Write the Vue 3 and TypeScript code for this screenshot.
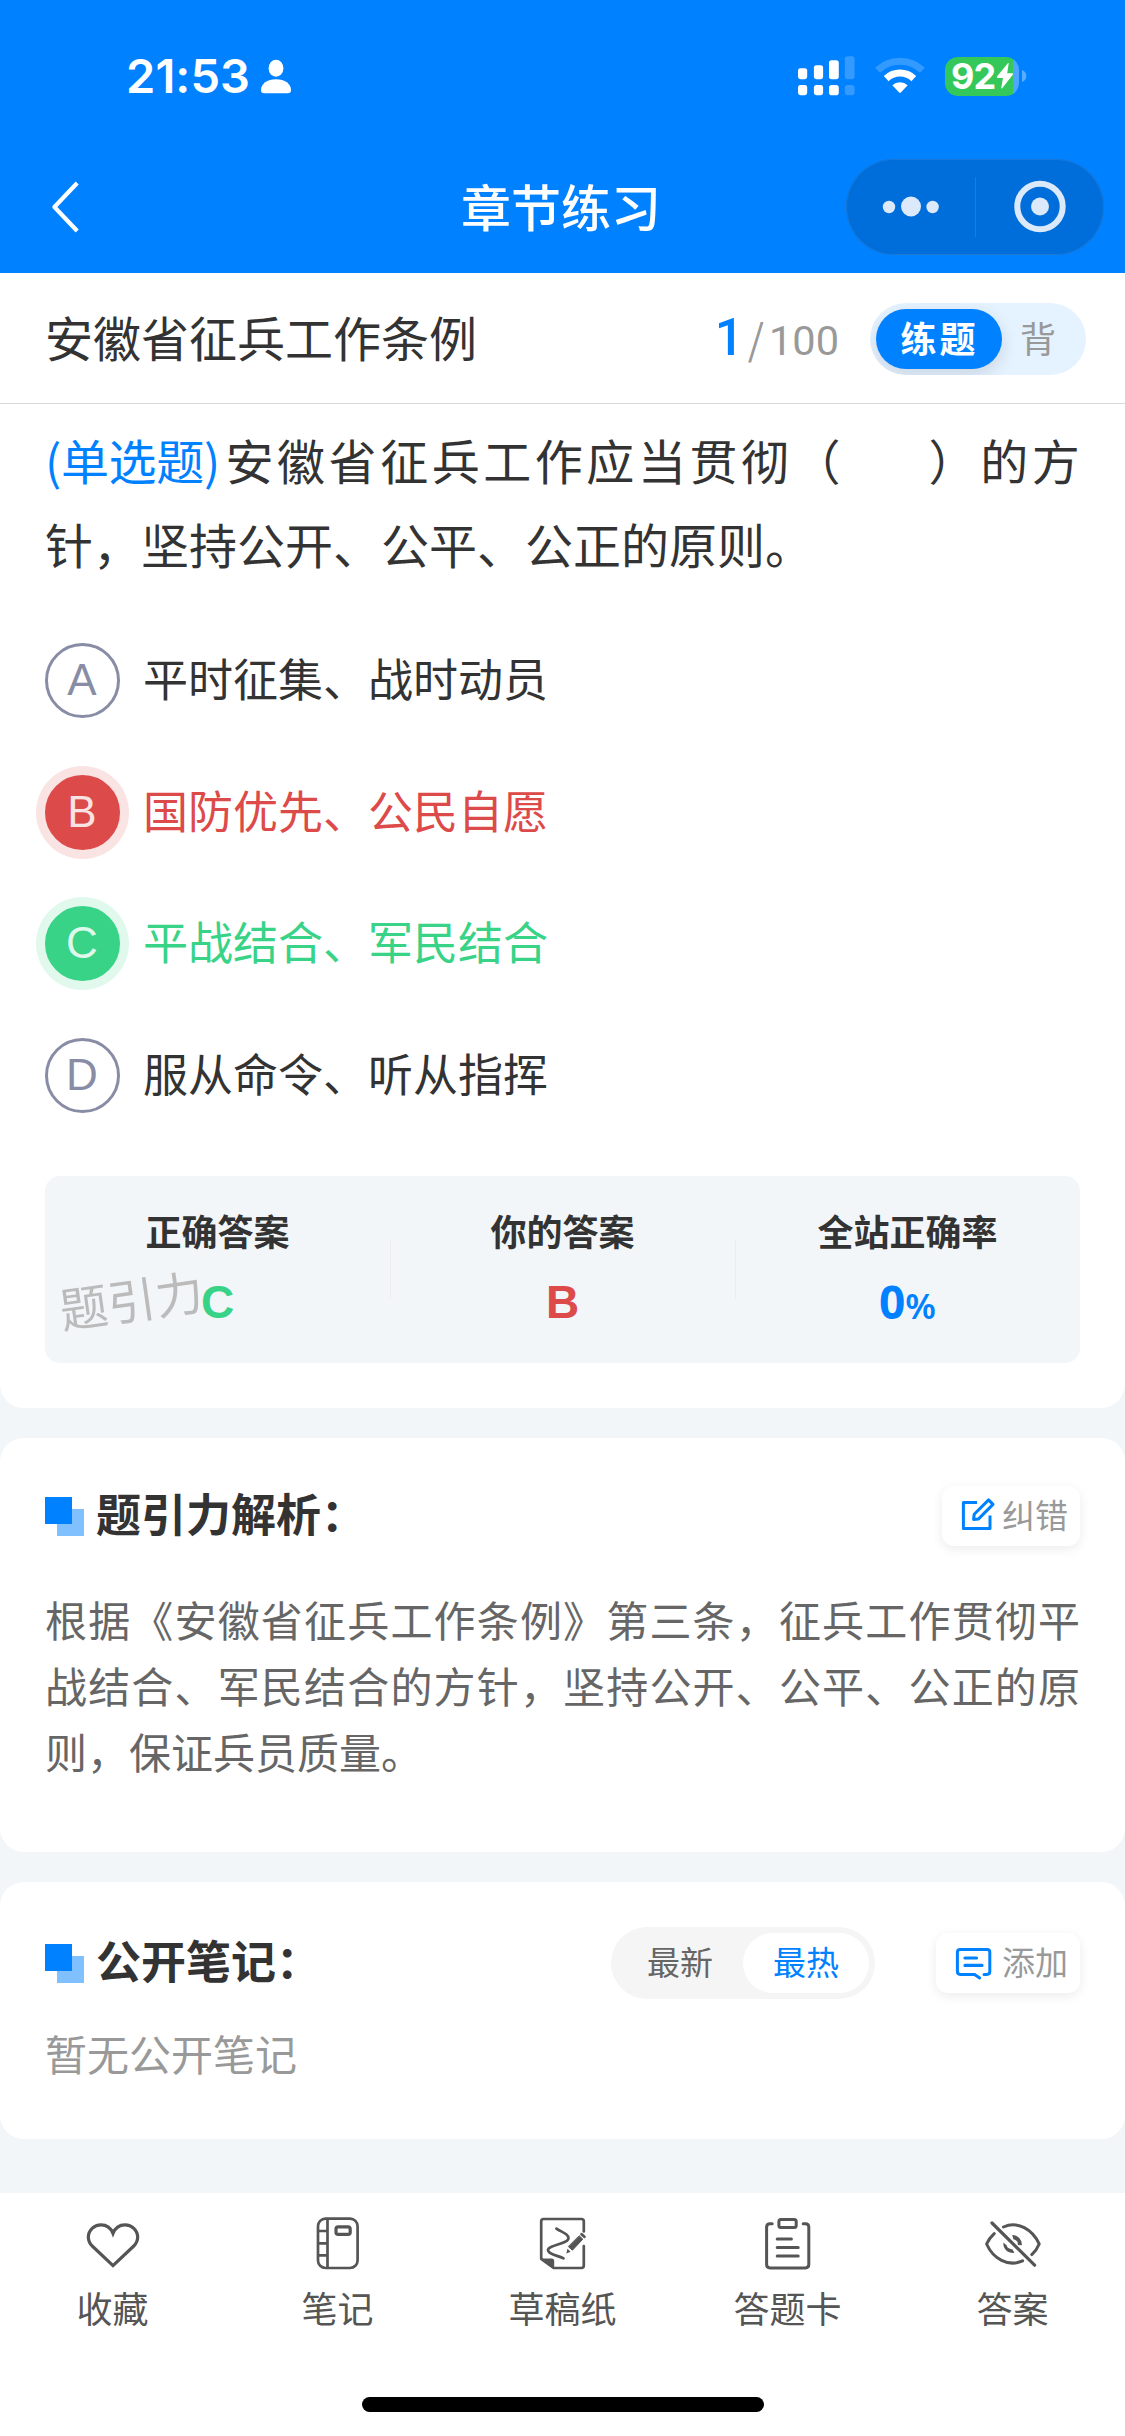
<script setup lang="ts">
import { ref } from 'vue'

interface Option {
  key: string
  text: string
  state: 'plain' | 'wrong' | 'right'
}

const options: Option[] = [
  { key: 'A', text: '平时征集、战时动员', state: 'plain' },
  { key: 'B', text: '国防优先、公民自愿', state: 'wrong' },
  { key: 'C', text: '平战结合、军民结合', state: 'right' },
  { key: 'D', text: '服从命令、听从指挥', state: 'plain' },
]

const tabs = [
  { id: 'fav', label: '收藏' },
  { id: 'note', label: '笔记' },
  { id: 'draft', label: '草稿纸' },
  { id: 'card', label: '答题卡' },
  { id: 'answer', label: '答案' },
]

const sort = ref<'new' | 'hot'>('hot')
</script>

<template>
  <div class="page" lang="zh-CN">
    <header class="top">
      <div class="status">
        <span class="time">21:53</span>
        <svg class="person" width="32" height="36" viewBox="0 0 32 36" fill="#fff">
          <ellipse cx="16" cy="9.3" rx="7.4" ry="8.5" />
          <path d="M1 31C1 25 7 20.3 16 20.3S31 25 31 31C31 33.2 30 34.3 28 34.3H4C2 34.3 1 33.2 1 31Z" />
        </svg>
        <div class="status-right">
          <svg width="58" height="40" viewBox="0 0 58 40" fill="#fff">
            <rect x="0" y="12.2" width="9.2" height="11" rx="2.4" />
            <rect x="15.9" y="9.2" width="9.2" height="14" rx="2.4" />
            <rect x="31" y="4.2" width="9.8" height="19" rx="2.6" />
            <rect x="46.8" y="0.2" width="9.8" height="23" rx="2.6" opacity=".2" />
            <rect x="0" y="29" width="9.2" height="10.2" rx="2.4" />
            <rect x="15.9" y="29" width="9.2" height="10.2" rx="2.4" />
            <rect x="31" y="29" width="9.8" height="10.2" rx="2.8" />
            <rect x="46.8" y="29" width="9.8" height="10.2" rx="2.6" opacity=".2" />
          </svg>
          <svg class="wifi" width="50" height="40" viewBox="0 0 50 40" fill="none">
            <path d="M2.6 14.3A32 32 0 0 1 47.4 14.3" stroke="#fff" stroke-opacity=".2" stroke-width="7" />
            <path d="M11.2 22.6A20 20 0 0 1 38.8 22.6" stroke="#fff" stroke-width="7" />
            <path d="M17.3 29.2A11.6 11.6 0 0 1 32.7 29.2L25.8 36.6Q25 37.4 24.2 36.6Z" fill="#fff" />
          </svg>
          <div class="battery">
            <span class="level">92</span>
            <svg class="bolt" width="18" height="28" viewBox="0 0 18 28" fill="#fff">
              <path d="M11.8 1.2Q13 .4 12.6 2L11.2 11.2H16.4Q17.6 11.4 16.8 12.8L6.4 26Q5 27.4 5.3 25.6L7 16H1.7Q.3 15.7 1.2 14.2Z" />
            </svg>
          </div>
          <svg class="nub" width="5" height="12" viewBox="0 0 5 12"><path d="M0 0Q4.4 1.8 4.4 6T0 12Z" fill="#fff" opacity=".35" /></svg>
        </div>
      </div>
      <nav class="nav">
        <svg class="back" width="30" height="54" viewBox="0 0 30 54" fill="none" stroke="#fff" stroke-width="4.2">
          <path d="M26.2 3L3.4 27L26.2 51" stroke-linejoin="round" />
        </svg>
        <h1>章节练习</h1>
        <div class="capsule">
          <svg width="129" height="96" viewBox="0 0 129 96" fill="#dbe9fa">
            <circle cx="43" cy="48" r="6.2" />
            <circle cx="65" cy="47.5" r="10" />
            <circle cx="86.6" cy="48" r="6.2" />
          </svg>
          <i class="split"></i>
          <svg width="127" height="96" viewBox="0 0 127 96">
            <circle cx="64" cy="47.5" r="22.7" fill="none" stroke="#dbe9fa" stroke-width="6" />
            <circle cx="64" cy="47.5" r="9" fill="#dbe9fa" />
          </svg>
        </div>
      </nav>
    </header>

    <section class="bar">
      <h2>安徽省征兵工作条例</h2>
      <div class="count"><b>1</b><i>/</i><span>100</span></div>
      <div class="mode">
        <span class="mode-on">练题</span>
        <span class="mode-off">背</span>
      </div>
    </section>

    <main>
      <section class="card question">
        <p class="stem spread"><em>(单选题)</em><span>安徽省征兵工作应当贯彻（</span><span class="blank"></span><span>）的方</span></p>
        <p class="stem">针，坚持公开、公平、公正的原则。</p>
        <ul class="options">
          <li v-for="o in options" :key="o.key" :class="o.state">
            <span class="key">{{ o.key }}</span>
            <span class="text">{{ o.text }}</span>
          </li>
        </ul>
        <div class="result">
          <div class="cell">
            <span class="label">正确答案</span>
            <span class="value green">C</span>
          </div>
          <div class="cell ruled">
            <span class="label">你的答案</span>
            <span class="value red">B</span>
          </div>
          <div class="cell ruled">
            <span class="label">全站正确率</span>
            <span class="value rate">0<small>%</small></span>
          </div>
          <span class="mark">题引力</span>
        </div>
      </section>

      <section class="card analysis">
        <div class="head">
          <svg class="squares" width="39" height="39" viewBox="0 0 39 39">
            <rect x="12" y="12" width="27" height="27" fill="#80c0ff" />
            <rect width="27" height="27" fill="#0081ff" />
          </svg>
          <h3>题引力解析：</h3>
          <button class="action fix">
            <svg width="36" height="36" viewBox="0 0 36 36" fill="none" stroke="#0081ff" stroke-width="3" stroke-linejoin="round">
              <path d="M17 5.6H3.4V31.6H30V18.4" />
              <path d="M28.6 2.9L33 7.4L18.6 21.9L13.6 22.4L14.2 17.3Z" />
            </svg>
            <span>纠错</span>
          </button>
        </div>
        <p>根据《安徽省征兵工作条例》第三条，征兵工作贯彻平战结合、军民结合的方针，坚持公开、公平、公正的原则，保证兵员质量。</p>
      </section>

      <section class="card notes">
        <div class="head">
          <svg class="squares" width="39" height="39" viewBox="0 0 39 39">
            <rect x="12" y="12" width="27" height="27" fill="#80c0ff" />
            <rect width="27" height="27" fill="#0081ff" />
          </svg>
          <h3>公开笔记：</h3>
          <div class="sort">
            <span :class="{ on: sort === 'new' }" @click="sort = 'new'">最新</span>
            <span :class="{ on: sort === 'hot' }" @click="sort = 'hot'">最热</span>
          </div>
          <button class="action add">
            <svg width="38" height="34" viewBox="0 0 38 34" fill="none" stroke="#0081ff" stroke-width="3" stroke-linecap="round" stroke-linejoin="round">
              <path d="M24.7 31L19.6 27.4H5.2Q2.4 27.4 2.4 24.6V5.2Q2.4 2.4 5.2 2.4H32Q34.8 2.4 34.8 5.2V24.6Q34.8 27.4 32 27.4H29" />
              <path d="M10 11H21.5M10 18.4H27" stroke-width="3.2" />
            </svg>
            <span>添加</span>
          </button>
        </div>
        <p>暂无公开笔记</p>
      </section>
    </main>

    <footer>
      <div class="tabs">
        <div v-for="t in tabs" :key="t.id" class="tab">
          <svg width="60" height="60" viewBox="0 0 60 60" fill="none" stroke="#555" stroke-width="3" stroke-linecap="round" stroke-linejoin="round">
            <path
              v-if="t.id === 'fav'"
              stroke-width="3.2"
              stroke-linejoin="miter"
              d="M30 51.6L9.2 32A13 13 0 0 1 5.3 23A12.6 12.6 0 0 1 18 10.8C23.5 10.8 28 14.2 30 19.4C32 14.2 36.5 10.8 42 10.8A12.6 12.6 0 0 1 54.7 23A13 13 0 0 1 50.8 32Z"
            />
            <g v-else-if="t.id === 'note'" stroke-width="2.7">
              <rect x="10" y="4.7" width="39.6" height="49.3" rx="7.5" />
              <path d="M19.5 5V54M10 17H19M10 29.3H19M10 41.3H19" stroke-linecap="butt" />
              <rect x="28" y="12.8" width="14.2" height="7.6" rx="2.2" stroke-width="3.2" />
            </g>
            <g v-else-if="t.id === 'draft'" stroke-width="2.7">
              <path d="M50.8 17.5V7.4Q50.8 5 48.4 5H10.6Q8.2 5 8.2 7.4V44.8L20.6 54H48.4Q50.8 54 50.8 51.6V32" />
              <path d="M7.6 44.4H18.6Q21.2 44.4 21.2 47V54.4Z" fill="#555" stroke="none" />
              <path d="M23.4 14.6C28.5 18.3 35.5 19.5 35.5 24.2C35.5 29.6 15 31.2 15 36C15 40.4 26.5 42 30.5 44.4" />
              <path d="M46.4 22L49.8 25.2L39.4 36.2L35.6 32.8Z" fill="#555" stroke-width="1" />
              <path d="M34.4 34.8L37.6 37.8L33.4 39.6Z" fill="#555" stroke="none" />
              <path d="M48.6 20.2L51.4 22.8" stroke-width="2.8" />
            </g>
            <g v-else-if="t.id === 'card'">
              <path d="M14.2 9.8H12Q8.6 9.8 8.6 13V50.6Q8.6 53.9 12 53.9H47.4Q50.8 53.9 50.8 50.6V13Q50.8 9.8 47.4 9.8H45.2" />
              <rect x="20.9" y="5.5" width="17.3" height="7.9" rx="2" />
              <path d="M19.2 25H33.4M19.2 33.4H40.2M19.2 42H40.2" />
            </g>
            <g v-else>
              <path d="M20.4 13C35 6.6 49.5 15.5 56.2 30Q53.6 36.3 48.8 40.6" />
              <path d="M11.2 19.6Q6 24.3 3.6 30C10 44.5 25 53.4 39.6 46.9" />
              <path d="M9 9L51.6 51.2" stroke-width="3.2" />
              <path d="M29.2 21A9.4 9.4 0 0 1 38.8 31.2L34.8 31Q35.4 26.2 30.4 25.2Z" fill="#555" stroke="none" />
              <path d="M20.4 28.4A9.4 9.4 0 0 0 31.4 38.8L29.6 35.4Q24 34.8 23.8 31.6Z" fill="#555" stroke="none" />
            </g>
          </svg>
          <span>{{ t.label }}</span>
        </div>
      </div>
      <div class="home"></div>
    </footer>
  </div>
</template>

<style>
body {
  margin: 0;
  background: #f2f6f9;
}
</style>

<style scoped>
.page {
  width: 1125px;
  height: 2436px;
  display: flex;
  flex-direction: column;
  overflow: hidden;
  background: #f2f6f9;
  color: #333;
  font-family: 'Noto Sans CJK SC', 'Liberation Sans', sans-serif;
  text-spacing-trim: space-all;
}
.page * {
  box-sizing: border-box;
}
h1,
h2,
h3,
p,
ul {
  margin: 0;
  padding: 0;
}
em,
i {
  font-style: normal;
}
svg {
  display: block;
  flex: none;
}
.top {
  height: 273px;
  flex: none;
  background: #0081ff;
  color: #fff;
}
.status {
  height: 159px;
  padding: 0 98px 7px 126px;
  display: flex;
  align-items: center;
}
.time {
  font: 600 47px/60px Inter, sans-serif;
  letter-spacing: 0.1px;
  width: 134px;
}
.person {
  margin-top: 2px;
}
.status-right {
  margin-left: auto;
  display: flex;
  align-items: center;
}
.wifi {
  margin-left: 19px;
}
.battery {
  margin-left: 20px;
  width: 74px;
  height: 39px;
  padding-left: 6px;
  border-radius: 13px;
  display: flex;
  align-items: center;
  background: linear-gradient(90deg, #34c759 67.5px, #4da7ff 67.5px);
}
.level {
  font: 700 36px/39px Inter, sans-serif;
  letter-spacing: -0.8px;
  width: 45px;
}
.nub {
  margin-left: 3px;
}
.nav {
  height: 96px;
  padding: 0 21px 0 51px;
  display: flex;
  align-items: center;
}
.nav h1 {
  margin-left: 380px;
  margin-right: auto;
  font-size: 50px;
  line-height: 72px;
  font-weight: 500;
  padding-bottom: 4px;
}
.capsule {
  width: 258px;
  height: 96px;
  border-radius: 48px;
  display: flex;
  align-items: center;
  background: #006eda;
  box-shadow: inset 0 0 0 1px #1a78d6;
}
.split {
  width: 1px;
  height: 60px;
  background: #1a7ddd;
}
.bar {
  height: 131px;
  flex: none;
  padding: 2px 39px 0 45px;
  display: flex;
  align-items: center;
  background: #fff;
  border-bottom: 1px solid #d8d8d8;
}
.bar h2 {
  font-size: 48px;
  line-height: 72px;
  font-weight: 400;
  padding-bottom: 6px;
  flex: 1;
}
.count {
  display: flex;
  align-items: baseline;
  color: #999;
  font: 41.5px/60px Roboto, sans-serif;
  margin-right: 31px;
}
.count b {
  color: #0081ff;
  font-weight: 500;
  font-size: 51px;
  margin-right: 4px;
}
.count i {
  font-family: 'Noto Sans CJK SC', sans-serif;
  margin-right: 5px;
}
.mode {
  width: 216px;
  height: 72px;
  padding: 6px;
  border-radius: 36px;
  background: #e5f2ff;
  display: flex;
  font-size: 36px;
  line-height: 56px;
  text-align: center;
  overflow: hidden;
}
.mode-on {
  width: 126px;
  height: 60px;
  border-radius: 30px;
  background: #0081ff;
  color: #fff;
  font-weight: 700;
  letter-spacing: 3px;
  padding-left: 1px;
  box-shadow: 0 6px 18px rgba(0, 0, 0, 0.12);
}
.mode-off {
  width: 72px;
  color: #999;
}
.card {
  background: #fff;
  border-radius: 24px;
}
.question {
  height: 1004px;
  padding: 13px 45px 0;
  border-radius: 0 0 24px 24px;
}
.stem {
  font-size: 48px;
  line-height: 84px;
  height: 84px;
  white-space: nowrap;
}
.spread {
  display: flex;
  letter-spacing: 3.55px;
}
.spread > * {
  flex: none;
}
.stem em {
  color: #0081ff;
  letter-spacing: -0.3px;
  width: 180.5px;
}
.blank {
  width: 84.5px;
}
.options {
  list-style: none;
  margin-top: 30px;
}
.options li {
  height: 131.5px;
  display: flex;
  align-items: center;
}
.key {
  width: 75px;
  height: 75px;
  padding-right: 1px;
  border-radius: 50%;
  border: 3px solid #888da5;
  color: #888da5;
  text-align: center;
  font: 44px/68px 'Liberation Sans', sans-serif;
}
.text {
  margin-left: 23px;
  font-size: 45px;
  line-height: 66px;
  padding-bottom: 5px;
}
.wrong .key {
  color: rgba(255, 255, 255, 0.85);
  border-color: #dc4a4a;
  background: #dc4a4a;
  box-shadow: 0 0 0 9px #fae3e3;
}
.right .key {
  color: rgba(255, 255, 255, 0.85);
  border-color: #38d387;
  background: #38d387;
  box-shadow: 0 0 0 9px #e1f9ed;
}
.wrong .text {
  color: #dc4a4a;
}
.right .text {
  color: #38d387;
}
.result {
  position: relative;
  margin-top: 35px;
  height: 187px;
  border-radius: 15px;
  background: #f2f6f9;
  display: flex;
}
.cell {
  width: 345px;
  padding-top: 30px;
  display: flex;
  flex-direction: column;
  align-items: center;
}
.ruled {
  background: linear-gradient(#eeecec, #eeecec) 0 63px / 1px 60px no-repeat;
}
.label {
  font-size: 36px;
  line-height: 48px;
  font-weight: 700;
}
.value {
  margin-top: 18px;
  font: 700 46px/60px 'Liberation Sans', sans-serif;
}
.rate {
  display: flex;
  align-items: baseline;
  height: 60px;
  color: #0081ff;
  font: 700 46px/58px 'Noto Sans', sans-serif;
}
.rate small {
  font-size: 35px;
  font-weight: 600;
}
.green {
  color: #38d387;
}
.red {
  color: #dc4a4a;
}
.mark {
  position: absolute;
  left: 14px;
  top: 86px;
  font-size: 48px;
  line-height: 72px;
  color: #bbb;
  transform: rotate(-8deg);
}
.analysis {
  margin-top: 30px;
  height: 414px;
  padding: 48px 45px 0;
}
.notes {
  margin-top: 30px;
  height: 257px;
  padding: 45px 45px 0;
}
.head {
  display: flex;
  align-items: center;
  height: 60px;
}
.notes .head {
  height: 72px;
}
.head h3 {
  margin-left: 12px;
  font-size: 45px;
  line-height: 60px;
  font-weight: 700;
  padding-bottom: 7px;
  flex: 1;
  white-space: nowrap;
}
.action {
  height: 60px;
  padding: 0 12px 0 18px;
  border: 0;
  border-radius: 12px;
  display: flex;
  align-items: center;
  background: #fff;
  color: #999;
  font: 33px/48px 'Noto Sans CJK SC', sans-serif;
  box-shadow: 0 3px 12px rgba(0, 0, 0, 0.08);
}
.action span {
  padding-bottom: 4px;
}
.fix {
  width: 138px;
}
.fix svg {
  margin: 0 6px 2px 0;
}
.add {
  width: 144px;
  margin-left: 61px;
}
.add svg {
  margin: 2px 9px 0 1px;
}
.analysis p {
  margin-top: 40px;
  font-size: 42px;
  line-height: 66px;
  text-align: justify;
  color: #666;
}
.notes p {
  margin-top: 21px;
  font-size: 42px;
  line-height: 66px;
  color: #999;
}
.sort {
  width: 264px;
  height: 72px;
  padding: 6px;
  border-radius: 36px;
  background: #f5f5f5;
  display: flex;
  font-size: 33px;
  line-height: 56px;
  text-align: center;
  color: #666;
}
.sort span {
  width: 126px;
  border-radius: 30px;
}
.sort .on {
  background: #fff;
  color: #0081ff;
}
footer {
  margin-top: auto;
  height: 243px;
  flex: none;
  padding-top: 21px;
  background: #fff;
  display: flex;
  flex-direction: column;
  align-items: center;
}
.tabs {
  width: 1125px;
  height: 183px;
  display: flex;
}
.tab {
  flex: 1;
  display: flex;
  flex-direction: column;
  align-items: center;
  color: #555;
  font-size: 36px;
  line-height: 48px;
}
.tab span {
  margin-top: 9px;
}
.home {
  width: 402px;
  height: 15px;
  border-radius: 8px;
  background: #000;
}
</style>
